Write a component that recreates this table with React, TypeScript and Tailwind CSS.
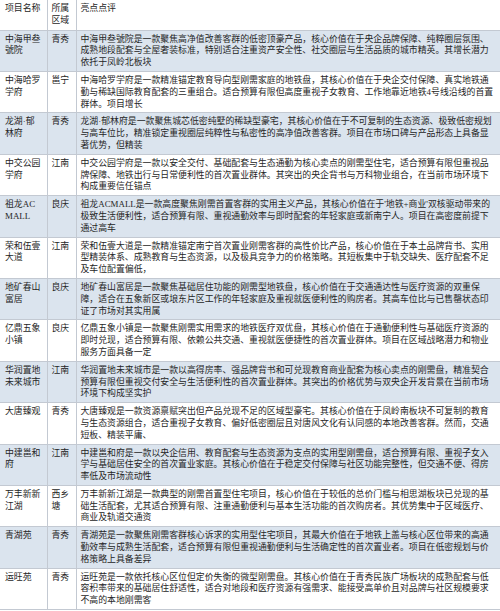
import React from 'react';

interface Row {
  name: string[];
  area: string[];
  lines: string[];
}

const rows: Row[] = [
  {
    name: ['中海甲叁', '號院'],
    area: ['青秀'],
    lines: [
      '中海甲叁號院是一款聚焦高净值改善客群的低密顶豪产品，核心价值在于央企品牌保障、纯粹圈层氛围、',
      '成熟地段配套与全屋奢装标准，特别适合注重资产安全性、社交圈层与生活品质的城市精英。其增长潜力',
      '依托于凤岭北板块',
    ],
  },
  {
    name: ['中海哈罗', '学府'],
    area: ['邕宁'],
    lines: [
      '中海哈罗学府是一款精准锚定教育导向型刚需家庭的地铁盘，其核心价值在于央企交付保障、真实地铁通',
      '勤与稀缺国际教育配套的三重组合。适合预算有限但高度重视子女教育、工作地靠近地铁4号线沿线的首置',
      '群体。项目增长',
    ],
  },
  {
    name: ['龙湖·郁', '林府'],
    area: ['青秀'],
    lines: [
      '龙湖·郁林府是一款聚焦城芯低密纯墅的稀缺型豪宅，其核心价值在于不可复制的生态资源、极致低密规划',
      '与高车位比，精准锁定重视圈层纯粹性与私密性的高净值改善客群。项目在市场口碑与产品形态上具备显',
      '著优势，但精装',
    ],
  },
  {
    name: ['中交公园', '学府'],
    area: ['江南'],
    lines: [
      '中交公园学府是一款以安全交付、基础配套与生态通勤为核心卖点的刚需型住宅，适合预算有限但重视品',
      '牌保障、地铁出行与日常便利性的首次置业群体。其突出的央企背书与万科物业组合，在当前市场环境下',
      '构成重要信任锚点',
    ],
  },
  {
    name: ['祖龙AC', 'MALL'],
    area: ['良庆'],
    lines: [
      "祖龙ACMALL是一款高度聚焦刚需首置客群的实用主义产品，其核心价值在于'地铁+商业'双核驱动带来的",
      '极致生活便利性，适合预算有限、重视通勤效率与即时配套的年轻家庭或新南宁人。项目在高密度前提下',
      '通过高车',
    ],
  },
  {
    name: ['荣和伍壹', '大道'],
    area: ['江南'],
    lines: [
      '荣和伍壹大道是一款精准锚定南宁首次置业刚需客群的高性价比产品，核心价值在于本土品牌背书、实用',
      '型精装体系、成熟教育与生态资源，以及极具竞争力的价格策略。其短板集中于轨交缺失、医疗配套不足',
      '及车位配置偏低，',
    ],
  },
  {
    name: ['地矿春山', '富居'],
    area: ['良庆'],
    lines: [
      '地矿春山富居是一款聚焦基础居住功能的刚需型地铁盘，核心价值在于交通通达性与医疗资源的双重保',
      '障，适合在五象新区或埌东片区工作的年轻家庭及重视就医便利性的购房者。其高车位比与已售罄状态印',
      '证了市场对其实用属',
    ],
  },
  {
    name: ['亿鼎五象', '小镇'],
    area: ['良庆'],
    lines: [
      '亿鼎五象小镇是一款聚焦刚需实用需求的地铁医疗双优盘，其核心价值在于通勤便利性与基础医疗资源的',
      '即时兑现，适合预算有限、依赖公共交通、重视就医便捷性的首次置业群体。项目在区域战略潜力和物业',
      '服务方面具备一定',
    ],
  },
  {
    name: ['华润置地', '未来城市'],
    area: ['江南'],
    lines: [
      '华润置地未来城市是一款以高得房率、强品牌背书和可兑现教育商业配套为核心卖点的刚需盘，精准契合',
      '预算有限但重视交付安全与生活便利性的首次置业群体。其突出的价格优势与双央企开发背景在当前市场',
      '环境下构成坚实护',
    ],
  },
  {
    name: ['大唐臻观'],
    area: ['青秀'],
    lines: [
      '大唐臻观是一款资源禀赋突出但产品兑现不足的区域型豪宅。其核心价值在于凤岭南板块不可复制的教育',
      '与生态资源组合，适合重视子女教育、偏好低密圈层且对唐风文化有认同感的本地改善客群。然而，交通',
      '短板、精装平庸、',
    ],
  },
  {
    name: ['中建邕和', '府'],
    area: ['江南'],
    lines: [
      '中建邕和府是一款以央企信用、教育配套与生态资源为支点的实用型刚需盘，适合预算有限、重视子女入',
      '学与基础居住安全的首次置业家庭。其核心价值在于稳定交付保障与社区功能完整性，但交通不便、得房',
      '率低及市场流动性',
    ],
  },
  {
    name: ['万丰新新', '江湖'],
    area: ['西乡', '塘'],
    lines: [
      '万丰新新江湖是一款典型的刚需首置型住宅项目，核心价值在于较低的总价门槛与相思湖板块已兑现的基',
      '础生活配套，尤其适合预算有限、注重通勤便利与基本生活功能的首次购房者。其优势集中于区域医疗、',
      '商业及轨道交通资',
    ],
  },
  {
    name: ['青湖苑'],
    area: ['青秀'],
    lines: [
      '青湖苑是一款聚焦刚需客群核心诉求的实用型住宅项目，其最大价值在于地铁上盖与核心区位带来的高通',
      '勤效率与成熟生活配套，适合预算有限但重视通勤便利与生活确定性的首次置业者。项目在低密规划与价',
      '格策略上具备差异',
    ],
  },
  {
    name: ['运旺苑'],
    area: ['青秀'],
    lines: [
      '运旺苑是一款依托核心区位但定价失衡的微型刚需盘。其核心价值在于青秀民族广场板块的成熟配套与低',
      '容积率带来的基础居住舒适性，适合对地段和医疗资源有强需求、能接受高单价且对品牌与社区规模要求',
      '不高的本地刚需客',
    ],
  },
];

const Lines = ({ items }: { items: string[] }) => (
  <>
    {items.map((t, i) => (
      <div key={i} className="whitespace-nowrap">
        {t}
      </div>
    ))}
  </>
);

const App = () => {
  return (
    <div
      className="w-[500px] h-[611px] overflow-hidden bg-white text-[#262626] text-[8.9px] leading-[11.8px]"
      style={{ fontFamily: '"Liberation Serif", "Noto Sans CJK SC", sans-serif' }}
    >
      <table className="w-full table-fixed border-collapse">
        <colgroup>
          <col className="w-[47px]" />
          <col className="w-[29px]" />
          <col />
        </colgroup>
        <thead>
          <tr className="bg-white border-b border-[#c3c9d2]">
            <th className="font-normal text-left align-top pl-[5px] pt-[3px] pb-[3px] border-r border-[#c3c9d2]">
              项目名称
            </th>
            <th className="font-normal text-left align-top pl-[4px] pt-[3px] pb-[3px] border-r border-[#c3c9d2]">
              <Lines items={['所属', '区域']} />
            </th>
            <th className="font-normal text-left align-top pl-[4px] pt-[3px] pb-[3px]">亮点点评</th>
          </tr>
        </thead>
        <tbody>
          {rows.map((r, i) => (
            <tr
              key={i}
              className={`border-b border-[#c3c9d2] ${i % 2 === 0 ? 'bg-[#dbe4ee]' : 'bg-white'}`}
            >
              <td className="align-top pl-[5px] pt-[3px] pb-[2px] border-r border-[#c3c9d2]">
                <Lines items={r.name} />
              </td>
              <td className="align-top pl-[4px] pt-[3px] pb-[2px] border-r border-[#c3c9d2]">
                <Lines items={r.area} />
              </td>
              <td className="align-top pl-[4px] pt-[3px] pb-[2px]">
                <Lines items={r.lines} />
              </td>
            </tr>
          ))}
        </tbody>
      </table>
    </div>
  );
};

export default App;
